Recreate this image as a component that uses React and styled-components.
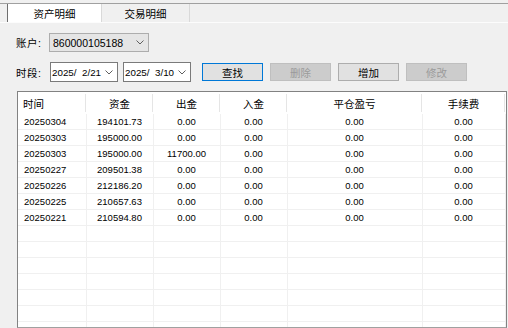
import React from 'react'
import styled, { createGlobalStyle } from 'styled-components'

const GlobalStyle = createGlobalStyle`
  html, body {
    margin: 0;
    padding: 0;
    background: #f0f0f0;
  }
  body {
    font-family: "Liberation Sans", "Noto Sans CJK SC", sans-serif;
    color: #000;
  }
`

const rows = [
    ['20250304', '194101.73', '0.00', '0.00', '0.00', '0.00'],
    ['20250303', '195000.00', '0.00', '0.00', '0.00', '0.00'],
    ['20250303', '195000.00', '11700.00', '0.00', '0.00', '0.00'],
    ['20250227', '209501.38', '0.00', '0.00', '0.00', '0.00'],
    ['20250226', '212186.20', '0.00', '0.00', '0.00', '0.00'],
    ['20250225', '210657.63', '0.00', '0.00', '0.00', '0.00'],
    ['20250221', '210594.80', '0.00', '0.00', '0.00', '0.00'],
]

const columns = [
    { title: '时间', width: 68, left: true },
    { title: '资金', width: 67 },
    { title: '出金', width: 67 },
    { title: '入金', width: 67 },
    { title: '平仓盈亏', width: 135 },
    { title: '手续费', width: 83 },
]

const EMPTY_ROWS = 8

function Chevron() {
    return (
        <svg width="8" height="5" viewBox="0 0 8 5">
            <polyline points="0.5,0.5 4,4 7.5,0.5" fill="none" stroke="#5f5f5f" strokeWidth="1" />
        </svg>
    )
}

function App() {
    return (
        <Page>
            <GlobalStyle />
            <TabStrip>
                <Tab $active $w={95}>资产明细</Tab>
                <Tab $w={88}>交易明细</Tab>
            </TabStrip>

            <FormRow $top={10}>
                <Label $w={33}>账户:</Label>
                <Combo $w={100}>
                    <span>860000105188</span>
                    <Chevron />
                </Combo>
            </FormRow>

            <FormRow $top={10}>
                <Label $w={34}>时段:</Label>
                <DateBox>
                    <DateText>2025/  2/21</DateText>
                    <Chevron />
                </DateBox>
                <DateBox>
                    <DateText>2025/  3/10</DateText>
                    <Chevron />
                </DateBox>
                <Buttons>
                    <Button $focused>查找</Button>
                    <Button disabled>删除</Button>
                    <Button>增加</Button>
                    <Button disabled>修改</Button>
                </Buttons>
            </FormRow>

            <Grid>
                <table>
                    <colgroup>
                        {columns.map((c) => (
                            <col key={c.title} style={{ width: c.width }} />
                        ))}
                        <col />
                    </colgroup>
                    <thead>
                        <tr>
                            {columns.map((c) => (
                                <HeadCell key={c.title} $left={c.left}>{c.title}</HeadCell>
                            ))}
                            <HeadCell $blank />
                        </tr>
                    </thead>
                    <tbody>
                        {rows.map((r, i) => (
                            <tr key={i}>
                                {r.map((v, j) => (
                                    <Cell key={j} $left={columns[j].left}>{v}</Cell>
                                ))}
                                <Cell $blank />
                            </tr>
                        ))}
                        {Array.from({ length: EMPTY_ROWS }).map((_, i) => (
                            <tr key={'e' + i}>
                                {columns.map((c) => (
                                    <Cell key={c.title} />
                                ))}
                                <Cell $blank />
                            </tr>
                        ))}
                    </tbody>
                </table>
            </Grid>
        </Page>
    )
}

const Page = styled.div`
    width: 508px;
    height: 328px;
    overflow: hidden;
    display: flex;
    flex-direction: column;
    font-size: 10.5px;
`

const TabStrip = styled.div`
    margin-top: 3px;
    height: 18px;
    display: flex;
    padding-left: 7px;
    border-top: 1px solid #a0a0a0;
    border-bottom: 1px solid #fcfcfc;
`

const Tab = styled.div`
    width: ${(p) => p.$w}px;
    display: flex;
    align-items: center;
    justify-content: center;
    background: ${(p) => (p.$active ? '#ffffff' : '#f0f0f0')};
    border-left: ${(p) => (p.$active ? '1px solid #6e6e6e' : 'none')};
    border-right: 1px solid #d9d9d9;
    font-size: 10.5px;
    box-sizing: border-box;
`

const FormRow = styled.div`
    margin-top: ${(p) => p.$top}px;
    padding-left: 16px;
    display: flex;
    align-items: center;
`

const Label = styled.div`
    width: ${(p) => p.$w}px;
    flex: none;
    font-size: 10.5px;
    letter-spacing: 0.5px;
`

const Combo = styled.div`
    width: ${(p) => p.$w}px;
    height: 19px;
    box-sizing: border-box;
    background: #e5e5e5;
    border: 1px solid #adadad;
    display: flex;
    align-items: center;
    justify-content: space-between;
    padding: 0 4px 0 3px;
    font-size: 10.5px;
`

const DateBox = styled.div`
    width: 68px;
    height: 20px;
    box-sizing: border-box;
    background: #ffffff;
    border: 1px solid #7a7a7a;
    display: flex;
    align-items: center;
    justify-content: space-between;
    padding: 0 4px 0 1px;
    font-size: 9.8px;
    & + & {
        margin-left: 5px;
    }
`

const DateText = styled.span`
    white-space: pre;
`

const Buttons = styled.div`
    display: flex;
    gap: 7px;
    margin-left: 11px;
`

const Button = styled.button`
    width: 61px;
    height: 18px;
    box-sizing: border-box;
    padding: 0;
    font-family: "Liberation Sans", "Noto Sans CJK SC", sans-serif;
    font-size: 10.5px;
    color: #000;
    background: #e1e1e1;
    border: 1px solid ${(p) => (p.$focused ? '#0078d7' : '#adadad')};
    box-shadow: ${(p) => (p.$focused ? 'inset 0 0 0 1px #e1e1e1' : 'none')};
    border-radius: 0;
    &:disabled {
        background: #cccccc;
        border-color: #bfbfbf;
        color: #9a9a9a;
    }
`

const Grid = styled.div`
    flex: 1;
    margin: 9px 1px 0 17px;
    background: #ffffff;
    border: 1px solid #828282;
    border-bottom-color: #a0a0a0;
    overflow: hidden;
    table {
        border-collapse: collapse;
        table-layout: fixed;
        width: 100%;
    }
`

const HeadCell = styled.th`
    height: 22px;
    padding: 0 0 0 ${(p) => (p.$left ? '5px' : '0')};
    font-weight: 400;
    font-size: 10.5px;
    text-align: ${(p) => (p.$left ? 'left' : 'center')};
    background-image: ${(p) =>
        p.$blank ? 'none' : 'linear-gradient(#e5e5e5, #e5e5e5)'};
    background-size: 1px 18px;
    background-position: right center;
    background-repeat: no-repeat;
`

const Cell = styled.td`
    height: 15px;
    padding: 0 0 0 ${(p) => (p.$left ? '6px' : '0')};
    font-size: 9.5px;
    line-height: 15px;
    text-align: ${(p) => (p.$left ? 'left' : 'center')};
    white-space: nowrap;
    border-right: ${(p) => (p.$blank ? 'none' : '1px solid #f0f0f0')};
    border-bottom: ${(p) => (p.$blank ? 'none' : '1px solid #f0f0f0')};
`

export default App
